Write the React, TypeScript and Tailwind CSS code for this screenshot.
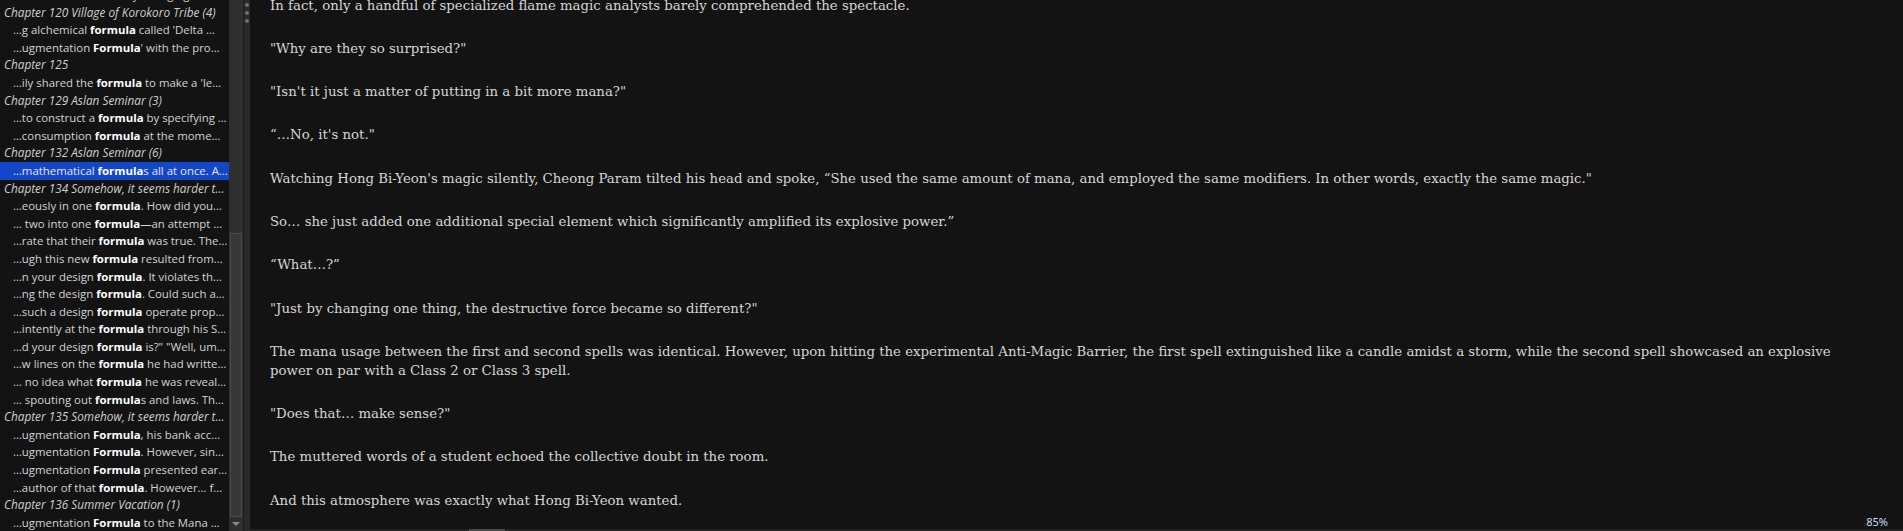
type Row =
  | { kind: "chapter"; title: string }
  | { kind: "hit"; pre: string; word: string; post: string; selected?: boolean };

const rows: Row[] = [
  { kind: "hit", pre: "…the whole ", word: "formula", post: " by changing …" },
  { kind: "chapter", title: "Chapter 120 Village of Korokoro Tribe (4)" },
  { kind: "hit", pre: "…g alchemical ", word: "formula", post: " called 'Delta …" },
  { kind: "hit", pre: "…ugmentation ", word: "Formula", post: "' with the pro…" },
  { kind: "chapter", title: "Chapter 125" },
  { kind: "hit", pre: "…ily shared the ", word: "formula", post: " to make a 'le…" },
  { kind: "chapter", title: "Chapter 129 Aslan Seminar (3)" },
  { kind: "hit", pre: "…to construct a ", word: "formula", post: " by specifying …" },
  { kind: "hit", pre: "…consumption ", word: "formula", post: " at the mome…" },
  { kind: "chapter", title: "Chapter 132 Aslan Seminar (6)" },
  { kind: "hit", pre: "…mathematical ", word: "formula", post: "s all at once. A…", selected: true },
  { kind: "chapter", title: "Chapter 134 Somehow, it seems harder t…" },
  { kind: "hit", pre: "…eously in one ", word: "formula", post: ". How did you…" },
  { kind: "hit", pre: "… two into one ", word: "formula", post: "—an attempt …" },
  { kind: "hit", pre: "…rate that their ", word: "formula", post: " was true. The …" },
  { kind: "hit", pre: "…ugh this new ", word: "formula", post: " resulted from…" },
  { kind: "hit", pre: "…n your design ", word: "formula", post: ". It violates the…" },
  { kind: "hit", pre: "…ng the design ", word: "formula", post: ". Could such a…" },
  { kind: "hit", pre: "…such a design ", word: "formula", post: " operate prop…" },
  { kind: "hit", pre: "…intently at the ", word: "formula", post: " through his S…" },
  { kind: "hit", pre: "…d your design ", word: "formula", post: " is?\" \"Well, um…" },
  { kind: "hit", pre: "…w lines on the ", word: "formula", post: " he had writte…" },
  { kind: "hit", pre: "… no idea what ", word: "formula", post: " he was reveali…" },
  { kind: "hit", pre: "… spouting out ", word: "formula", post: "s and laws. Th…" },
  { kind: "chapter", title: "Chapter 135 Somehow, it seems harder t…" },
  { kind: "hit", pre: "…ugmentation ", word: "Formula", post: ", his bank acc…" },
  { kind: "hit", pre: "…ugmentation ", word: "Formula", post: ". However, sin…" },
  { kind: "hit", pre: "…ugmentation ", word: "Formula", post: " presented ear…" },
  { kind: "hit", pre: "…author of that ", word: "formula", post: ". However… fo…" },
  { kind: "chapter", title: "Chapter 136 Summer Vacation (1)" },
  { kind: "hit", pre: "…ugmentation ", word: "Formula", post: " to the Mana …" },
];

const paragraphs = [
  "In fact, only a handful of specialized flame magic analysts barely comprehended the spectacle.",
  "\"Why are they so surprised?\"",
  "\"Isn't it just a matter of putting in a bit more mana?\"",
  "“…No, it's not.\"",
  "Watching Hong Bi-Yeon's magic silently, Cheong Param tilted his head and spoke, “She used the same amount of mana, and employed the same modifiers. In other words, exactly the same magic.\"",
  "So… she just added one additional special element which significantly amplified its explosive power.”",
  "“What…?”",
  "\"Just by changing one thing, the destructive force became so different?\"",
  "The mana usage between the first and second spells was identical. However, upon hitting the experimental Anti-Magic Barrier, the first spell extinguished like a candle amidst a storm, while the second spell showcased an explosive power on par with a Class 2 or Class 3 spell.",
  "\"Does that… make sense?\"",
  "The muttered words of a student echoed the collective doubt in the room.",
  "And this atmosphere was exactly what Hong Bi-Yeon wanted.",
];

const SearchList = () => {
  return (
    <div className="w-[229px] h-full bg-[#131313] overflow-hidden font-['Open_Sans','Noto_Sans',sans-serif]">
      <div className="-mt-[14px]">
        {rows.map((r, i) =>
          r.kind === "chapter" ? (
            <div key={i} className="h-[17.6px] leading-[17.6px] pl-[4px] pr-[1px] text-[11.8px] italic text-[#cfcfcf] whitespace-nowrap overflow-hidden text-ellipsis">
              {r.title}
            </div>
          ) : (
            <div
              key={i}
              className={
                r.selected
                  ? "h-[17.6px] leading-[17.6px] pl-[13px] pr-[1px] text-[11.4px] bg-[#1446c8] text-[#e6e6e6] whitespace-nowrap overflow-hidden text-ellipsis"
                  : "h-[17.6px] leading-[17.6px] pl-[13px] pr-[1px] text-[11.4px] text-[#d4d4d4] whitespace-nowrap overflow-hidden text-ellipsis"
              }
            >
              {r.pre}
              <b className="font-bold text-white">{r.word}</b>
              {r.post}
            </div>
          )
        )}
      </div>
    </div>
  );
};

const ListScrollbar = () => {
  return (
    <div className="w-[14px] h-full bg-[#2f2f2f] flex flex-col">
      <div className="h-[233px]" />
      <div className="flex-1 mx-[1px] bg-[#373737] border border-[#4a4a4a]" />
      <div className="h-[14px] flex items-center justify-center">
        <div className="w-0 h-0 border-l-[4px] border-r-[4px] border-t-[4px] border-l-transparent border-r-transparent border-t-[#8a8a8a]" />
      </div>
    </div>
  );
};

const Splitter = () => {
  return (
    <div className="w-[7px] h-full bg-[#292929] border-l border-[#1c1c1c] flex flex-col items-center pt-[3px] gap-[4px]">
      <div className="w-[4px] h-[4px] rounded-full bg-[#707070]" />
      <div className="w-[4px] h-[4px] rounded-full bg-[#707070]" />
      <div className="w-[4px] h-[4px] rounded-full bg-[#707070]" />
    </div>
  );
};

const Reader = () => {
  return (
    <div className="relative flex-1 h-full flex flex-col bg-[#131313]">
      <div className="flex-1 overflow-hidden">
        <div className="-mt-[4.5px] pl-[20px] pr-[48px] flex flex-col gap-[24.3px] font-['DejaVu_Serif',serif] text-[13.3px] leading-[19px] text-[#d6d6d6]">
          {paragraphs.map((p, i) => (
            <p key={i}>{p}</p>
          ))}
        </div>
      </div>
      <div className="h-[2px] bg-[#222222] flex">
        <div className="ml-[219px] w-[36px] bg-[#4a4a4a]" />
      </div>
      <span className="absolute right-[15px] bottom-[3px] font-['Noto_Sans',sans-serif] text-[11px] leading-[12px] text-[#c9ddf2]">
        85%
      </span>
    </div>
  );
};

export default function App() {
  return (
    <div className="w-[1903px] h-[531px] flex bg-[#131313] overflow-hidden">
      <SearchList />
      <ListScrollbar />
      <Splitter />
      <Reader />
    </div>
  );
}
